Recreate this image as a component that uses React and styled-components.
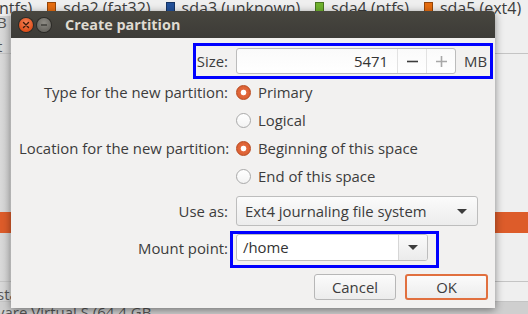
import React from 'react';
import styled, { createGlobalStyle } from 'styled-components';

const GlobalStyle = createGlobalStyle`
  html, body { margin: 0; padding: 0; }
  body {
    font-family: "Open Sans", "Noto Sans", sans-serif;
    font-size: 14.9px;
    color: #3c3c3c;
    background: #efefef;
  }
`;

const legend = [
  { color: null, label: 'ntfs)' },
  { color: '#e66c0f', label: 'sda2 (fat32)' },
  { color: '#23519a', label: 'sda3 (unknown)' },
  { color: '#6fb32e', label: 'sda4 (ntfs)' },
  { color: '#e66c0f', label: 'sda5 (ext4)' },
];

const bgRows = [
  { h: 13, text: 'B', line: false },
  { h: 25, text: 't', line: true },
  { h: 158, text: '', line: false },
  { h: 21, text: '', selected: true },
  { h: 49, text: '', line: true },
  { h: 20, text: 'sta', line: true },
];

function App() {
  return (
    <Desktop>
      <GlobalStyle />
      <Legend>
        {legend.map(({ color, label }) => (
          <LegendItem key={label}>
            {color && <Swatch $color={color} />}
            {label}
          </LegendItem>
        ))}
      </Legend>
      <Table>
        {bgRows.map((r, i) => (
          <BgRow key={i} $h={r.h} $line={r.line} $selected={r.selected}>
            {r.text}
          </BgRow>
        ))}
        <DiskLine>vare Virtual S (64.4 GB</DiskLine>
      </Table>

      <Dialog>
        <TitleBar>
          <WinButton $close>
            <svg width="8" height="8" viewBox="0 0 8 8">
              <path d="M1.5 1.5 L6.5 6.5 M6.5 1.5 L1.5 6.5" stroke="#3a1a0a" strokeWidth="1.4" strokeLinecap="round" />
            </svg>
          </WinButton>
          <WinButton>
            <svg width="8" height="8" viewBox="0 0 8 8">
              <path d="M1 4 L7 4" stroke="#3c3b37" strokeWidth="1.4" />
            </svg>
          </WinButton>
          <Title>Create partition</Title>
        </TitleBar>

        <Body>
          <Row $h={26}>
            <Label>Size:</Label>
            <Controls>
              <SpinEntry>
                <SpinValue>5471</SpinValue>
                <SpinButton>
                  <svg width="11" height="11" viewBox="0 0 11 11"><path d="M0 5.5 H11" stroke="#3c3c3c" strokeWidth="1.6" /></svg>
                </SpinButton>
                <SpinButton>
                  <svg width="11" height="11" viewBox="0 0 11 11"><path d="M0 5.5 H11 M5.5 0 V11" stroke="#a8a8a8" strokeWidth="1.6" /></svg>
                </SpinButton>
              </SpinEntry>
              <Unit>MB</Unit>
            </Controls>
          </Row>

          <Row $h={28} $mt={4}>
            <Label>Type for the new partition:</Label>
            <Radio $checked>Primary</Radio>
          </Row>
          <Row $h={28}>
            <span />
            <Radio>Logical</Radio>
          </Row>
          <Row $h={28}>
            <Label>Location for the new partition:</Label>
            <Radio $checked>Beginning of this space</Radio>
          </Row>
          <Row $h={28}>
            <span />
            <Radio>End of this space</Radio>
          </Row>

          <Row $h={30} $mt={6}>
            <Label>Use as:</Label>
            <Combo>
              Ext4 journaling file system
              <Arrow />
            </Combo>
          </Row>

          <Row $h={27} $mt={8}>
            <Label>Mount point:</Label>
            <ComboEntry>
              <ComboText>/home</ComboText>
              <ComboButton><Arrow /></ComboButton>
            </ComboEntry>
          </Row>

          <Buttons>
            <Button>Cancel</Button>
            <Button $default>OK</Button>
          </Buttons>
        </Body>

        <Highlight style={{ left: 182, top: 32, width: 300, height: 36 }} />
        <Highlight style={{ left: 219, top: 220, width: 209, height: 37 }} />
      </Dialog>
    </Desktop>
  );
}

const Desktop = styled.div`
  position: relative;
  width: 528px;
  height: 314px;
  overflow: hidden;
  background: #efefef;
`;

const Legend = styled.div`
  display: flex;
  align-items: flex-start;
  gap: 15px;
  height: 16px;
  margin-left: -1px;
  overflow: hidden;
  font-size: 16px;
  line-height: 17px;
  color: #3c3c3c;
  white-space: nowrap;
`;

const LegendItem = styled.span`
  display: flex;
  align-items: flex-start;
  gap: 7px;
`;

const Swatch = styled.span`
  display: inline-block;
  width: 7px;
  height: 10px;
  margin-top: 2px;
  background: ${(p) => p.$color};
  border: 1px solid rgba(0, 0, 0, 0.35);
`;

const Table = styled.div`
  display: flex;
  flex-direction: column;
  background: linear-gradient(90deg, #d9d9d9 0px, #d2d2d2 10px, #efefef 11px);
`;

const BgRow = styled.div`
  height: ${(p) => p.$h}px;
  display: flex;
  align-items: flex-end;
  padding-bottom: 1px;
  box-sizing: border-box;
  overflow: hidden;
  text-indent: -3px;
  font-size: 15px;
  line-height: 12px;
  color: #555;
  border-bottom: ${(p) => (p.$line ? '1px solid #c4c4c4' : 'none')};
  background: ${(p) => (p.$selected ? '#dd5c2a' : 'transparent')};
`;

const DiskLine = styled.div`
  height: 16px;
  padding-top: 3px;
  text-indent: -3px;
  font-size: 15px;
  line-height: 14px;
  color: #555;
  background: #cfcfcf;
  white-space: nowrap;
`;

const Dialog = styled.div`
  position: absolute;
  left: 11px;
  top: 11px;
  width: 484px;
  height: 297px;
  background: #f2f1f0;
  box-shadow: 0 2px 8px rgba(0, 0, 0, 0.45);
  border-radius: 4px 4px 0 0;
`;

const TitleBar = styled.div`
  height: 27px;
  display: flex;
  align-items: center;
  padding-left: 8px;
  gap: 4px;
  background: linear-gradient(#48463f, #3c3b37);
  border-radius: 4px 4px 0 0;
`;

const WinButton = styled.span`
  width: 14px;
  height: 14px;
  border-radius: 50%;
  display: flex;
  align-items: center;
  justify-content: center;
  background: ${(p) =>
    p.$close
      ? 'radial-gradient(circle at 50% 35%, #f7845a, #df4f1a 70%)'
      : 'radial-gradient(circle at 50% 35%, #8e8c85, #6a6862 70%)'};
  box-shadow: 0 0 0 1px rgba(0, 0, 0, 0.35);
`;

const Title = styled.span`
  margin-left: 10px;
  font-weight: bold;
  font-size: 14.4px;
  color: #dfdbd2;
`;

const Body = styled.div`
  padding: 10px 17px 0 8px;
  display: flex;
  flex-direction: column;
`;

const Row = styled.div`
  display: grid;
  grid-template-columns: 209px 1fr;
  column-gap: 8px;
  align-items: center;
  height: ${(p) => p.$h}px;
  margin-top: ${(p) => p.$mt || 0}px;
`;

const Label = styled.span`
  text-align: right;
  white-space: nowrap;
`;

const Controls = styled.div`
  display: flex;
  align-items: center;
  gap: 8px;
`;

const SpinEntry = styled.div`
  display: flex;
  width: 220px;
  height: 26px;
  box-sizing: border-box;
  border: 1px solid #bcbcbc;
  border-radius: 3px;
  background: linear-gradient(#fafafa, #ffffff);
`;

const SpinValue = styled.span`
  flex: 1;
  text-align: right;
  padding-right: 9px;
  line-height: 24px;
  color: #333;
`;

const SpinButton = styled.span`
  width: 28px;
  display: flex;
  align-items: center;
  justify-content: center;
  border-left: 1px solid #e2e2e2;
`;

const Unit = styled.span``;

const Radio = styled.span`
  display: flex;
  align-items: center;
  gap: 7px;
  white-space: nowrap;
  &::before {
    content: '';
    width: 15px;
    height: 15px;
    box-sizing: border-box;
    border-radius: 50%;
    ${(p) =>
      p.$checked
        ? `background: radial-gradient(circle, #ffffff 0 2.5px, #e3683c 3.2px, #d25a2c 100%);
           border: 1px solid #b9481d;`
        : `background: linear-gradient(#ffffff, #f3f3f3);
           border: 1px solid #a9a9a9;`}
  }
`;

const Arrow = styled.span`
  width: 0;
  height: 0;
  border-left: 5px solid transparent;
  border-right: 5px solid transparent;
  border-top: 5px solid #3c3c3c;
`;

const Combo = styled.div`
  width: 242px;
  height: 30px;
  box-sizing: border-box;
  display: flex;
  align-items: center;
  justify-content: space-between;
  padding: 0 10px 0 8px;
  border: 1px solid #bdbdbd;
  border-radius: 3px;
  background: linear-gradient(#fbfbfb, #ececec);
  color: #3c3c3c;
`;

const ComboEntry = styled.div`
  width: 192px;
  height: 27px;
  box-sizing: border-box;
  display: flex;
  border: 1px solid #bdbdbd;
  border-radius: 3px;
  background: #fff;
  overflow: hidden;
`;

const ComboText = styled.span`
  flex: 1;
  padding-left: 6px;
  line-height: 25px;
  color: #333;
`;

const ComboButton = styled.span`
  width: 28px;
  display: flex;
  align-items: center;
  justify-content: center;
  border-left: 1px solid #d6d6d6;
  background: linear-gradient(#fafafa, #ebebeb);
`;

const Buttons = styled.div`
  display: flex;
  justify-content: flex-end;
  gap: 9px;
  margin-top: 13px;
  margin-right: -10px;
`;

const Button = styled.button`
  width: ${(p) => (p.$default ? 83 : 82)}px;
  height: 26px;
  font: inherit;
  color: #3c3c3c;
  border-radius: 3px;
  border: ${(p) => (p.$default ? '2px solid #e1703f' : '1px solid #b7b7b7')};
  background: linear-gradient(#fbfbfb, #ececec);
  padding: 0;
`;

const Highlight = styled.div`
  position: absolute;
  box-sizing: border-box;
  border: 3px solid #0000ff;
  pointer-events: none;
`;

export default App;
